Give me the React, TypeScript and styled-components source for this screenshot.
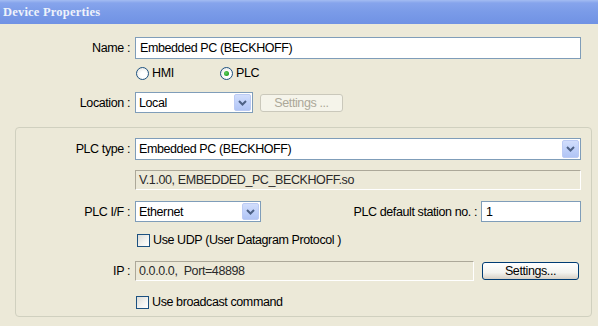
import React from 'react';
import styled, {createGlobalStyle} from 'styled-components';

const GlobalStyle = createGlobalStyle`
  html, body {
    margin: 0;
    padding: 0;
    background: #ece9d8;
  }
  body {
    font-family: "Liberation Sans", Arial, sans-serif;
    font-size: 12.5px;
    letter-spacing: -0.4px;
    color: #000;
  }
`;

const Window = styled.div`
  width: 598px;
  height: 326px;
  background: #ece9d8;
  overflow: hidden;
  display: flex;
  flex-direction: column;
`;

const TitleBar = styled.div`
  height: 24px;
  flex: none;
  display: flex;
  align-items: center;
  padding-left: 3px;
  background: linear-gradient(to bottom, #a3bcf2 0px, #86a4ec 3px, #7a9be8 12px, #7092e4 24px);
  color: #eef2fb;
  font-family: "Liberation Serif", "Times New Roman", serif;
  font-weight: bold;
  font-size: 12.5px;
  letter-spacing: 0.2px;
`;

const Form = styled.div`
  display: flex;
  flex-direction: column;
  padding: 13px 17px 0 0;
`;

const Row = styled.div<{$mt?: number; $h?: number}>`
  display: flex;
  align-items: center;
  height: ${p => p.$h ?? 22}px;
  margin-top: ${p => p.$mt ?? 0}px;
`;

const Label = styled.div<{$w: number}>`
  width: ${p => p.$w}px;
  flex: none;
  text-align: right;
  padding-right: 5px;
  box-sizing: border-box;
  white-space: nowrap;
`;

const InlineLabel = styled.div`
  margin-left: auto;
  padding-right: 4px;
  white-space: nowrap;
`;

const TextInput = styled.div<{$w?: number}>`
  ${p => (p.$w ? `width: ${p.$w}px; flex: none;` : 'flex: 1;')}
  height: 100%;
  box-sizing: border-box;
  border: 1px solid #7f9db9;
  background: #fff;
  display: flex;
  align-items: center;
  padding-left: 4px;
`;

const ReadOnlyField = styled.div<{$w?: number}>`
  ${p => (p.$w ? `width: ${p.$w}px; flex: none;` : 'flex: 1;')}
  height: 100%;
  box-sizing: border-box;
  border-top: 1px solid #aca899;
  border-left: 1px solid #aca899;
  border-right: 1px solid #fff;
  border-bottom: 1px solid #fff;
  background: #ece9d8;
  display: flex;
  align-items: center;
  padding-left: 3px;
  color: #2a2a2a;
  white-space: pre;
`;

const SelectBox = styled.div<{$w?: number}>`
  ${p => (p.$w ? `width: ${p.$w}px; flex: none;` : 'flex: 1;')}
  height: 100%;
  box-sizing: border-box;
  border: 1px solid #7f9db9;
  background: #fff;
  display: flex;
  align-items: stretch;
`;

const SelectValue = styled.div`
  flex: 1;
  display: flex;
  align-items: center;
  padding-left: 3px;
`;

const ArrowButton = styled.div`
  width: 17px;
  margin: 1px;
  flex: none;
  border: 1px solid #bccbf4;
  border-radius: 2px;
  box-sizing: border-box;
  background: linear-gradient(to bottom, #d2defc 0%, #c0d1fa 50%, #b1c5f5 100%);
  display: flex;
  align-items: center;
  justify-content: center;
`;

const Arrow = () => (
  <svg width="9" height="6" viewBox="0 0 9 6">
    <path d="M1 1 L4.5 4.5 L8 1" fill="none" stroke="#4d6185" strokeWidth="2" />
  </svg>
);

const Select = ({value, w}: {value: string; w?: number}) => (
  <SelectBox $w={w}>
    <SelectValue>{value}</SelectValue>
    <ArrowButton>
      <Arrow />
    </ArrowButton>
  </SelectBox>
);

const Button = styled.div<{$w: number; $disabled?: boolean}>`
  width: ${p => p.$w}px;
  height: 18px;
  flex: none;
  box-sizing: border-box;
  border: 1px solid ${p => (p.$disabled ? '#cac8bb' : '#003c74')};
  border-radius: 3px;
  background: ${p =>
    p.$disabled ? '#f5f4ea' : 'linear-gradient(to bottom, #ffffff 0%, #f3f3ef 60%, #d6d0c5 100%)'};
  color: ${p => (p.$disabled ? '#aca899' : '#000')};
  display: flex;
  align-items: center;
  justify-content: center;
`;

const Option = styled.div<{$w?: number}>`
  display: flex;
  align-items: center;
  ${p => (p.$w ? `width: ${p.$w}px;` : '')}
`;

const RadioCircle = styled.div<{$checked?: boolean}>`
  width: 13px;
  height: 13px;
  box-sizing: border-box;
  border-radius: 50%;
  border: 1px solid #1c5180;
  background: radial-gradient(circle at 60% 60%, #ffffff 30%, #e2e2dd 100%);
  display: flex;
  align-items: center;
  justify-content: center;
  margin-right: 3px;

  &::after {
    content: '';
    display: ${p => (p.$checked ? 'block' : 'none')};
    width: 5px;
    height: 5px;
    border-radius: 50%;
    background: radial-gradient(circle at 40% 40%, #64d064 0%, #21a121 70%);
  }
`;

const CheckBox = styled.div`
  width: 13px;
  height: 13px;
  box-sizing: border-box;
  border: 1px solid #1c5180;
  background: linear-gradient(135deg, #dcdcd7 0%, #f4f4f1 60%, #ffffff 100%);
  margin-right: 3px;
`;

const GroupBox = styled.div`
  margin: 14px -11px 0 15px;
  border: 1px solid #d0d0bf;
  border-radius: 4px;
  height: 190px;
  box-sizing: border-box;
  padding: 10px 10px 0 0;
  display: flex;
  flex-direction: column;
`;

const Spacer = styled.div<{$w: number}>`
  width: ${p => p.$w}px;
  flex: none;
`;

export default function App() {
  return (
    <Window>
      <GlobalStyle />
      <TitleBar>Device Properties</TitleBar>
      <Form>
        <Row>
          <Label $w={135}>Name :</Label>
          <TextInput>Embedded PC (BECKHOFF)</TextInput>
        </Row>
        <Row $mt={4} $h={20}>
          <Spacer $w={136} />
          <Option $w={84}>
            <RadioCircle />
            HMI
          </Option>
          <Option>
            <RadioCircle $checked />
            PLC
          </Option>
        </Row>
        <Row $mt={9} $h={21}>
          <Label $w={135}>Location :</Label>
          <Select value="Local" w={118} />
          <Spacer $w={7} />
          <Button $w={83} $disabled>
            Settings ...
          </Button>
        </Row>
        <GroupBox>
          <Row>
            <Label $w={119}>PLC type :</Label>
            <Select value="Embedded PC (BECKHOFF)" />
          </Row>
          <Row $mt={10} $h={20}>
            <Spacer $w={119} />
            <ReadOnlyField>V.1.00, EMBEDDED_PC_BECKHOFF.so</ReadOnlyField>
          </Row>
          <Row $mt={11} $h={21}>
            <Label $w={119}>PLC I/F :</Label>
            <Select value="Ethernet" w={126} />
            <InlineLabel>PLC default station no. :</InlineLabel>
            <TextInput $w={100}>1</TextInput>
          </Row>
          <Row $mt={8} $h={20}>
            <Spacer $w={121} />
            <Option>
              <CheckBox />
              Use UDP (User Datagram Protocol )
            </Option>
          </Row>
          <Row $mt={11} $h={20}>
            <Label $w={119}>IP :</Label>
            <ReadOnlyField $w={339}>0.0.0.0,  Port=48898</ReadOnlyField>
            <Spacer $w={8} />
            <Button $w={97}>Settings...</Button>
          </Row>
          <Row $mt={11} $h={20}>
            <Spacer $w={120} />
            <Option>
              <CheckBox />
              Use broadcast command
            </Option>
          </Row>
        </GroupBox>
      </Form>
    </Window>
  );
}
